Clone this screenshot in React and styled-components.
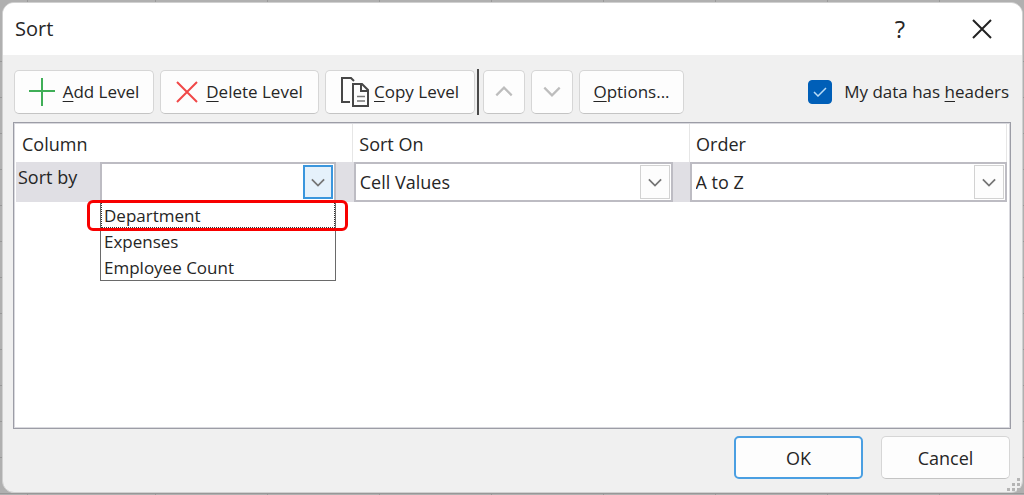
import React, { useState } from "react";
import styled, { createGlobalStyle } from "styled-components";

const GlobalStyle = createGlobalStyle`
  * { box-sizing: border-box; }
  html, body { margin: 0; padding: 0; }
  body {
    background-color: #b0b0b0;
    background-image:
      repeating-linear-gradient(90deg, transparent 0 111px, #989898 111px 112px),
      repeating-linear-gradient(180deg, transparent 0 35px, #989898 35px 36px);
    background-position: 44px 0, 0 26px;
    color: #262626;
    font-family: "Open Sans", "Noto Sans", sans-serif;
    font-size: 18px;
    line-height: 24px;
  }
  button, select, input { font: inherit; color: inherit; margin: 0; }
`;

const Desktop = styled.div`
  display: flex;
  min-height: 100vh;
  padding: 2px 1px 2px 2px;
`;

const Dialog = styled.main`
  flex: 1;
  display: flex;
  flex-direction: column;
  min-width: 0;
  background: #f0f0f0;
  border: 1px solid #d0d0d0;
  border-radius: 12px;
  overflow: hidden;
`;

const TitleBar = styled.header`
  display: flex;
  align-items: center;
  height: 52px;
  padding: 0 20px 0 12px;
  background: #fff;
`;

const Title = styled.h1`
  flex: 1;
  margin: 0;
  font-size: 20px;
  font-weight: 400;
`;

const TitleButton = styled.button`
  display: grid;
  place-items: center;
  width: 40px;
  height: 40px;
  padding: 0;
  margin-left: ${(p) => (p.$spaced ? "42px" : "0")};
  border: 0;
  background: transparent;
  font-size: 24px;
`;

const Toolbar = styled.div`
  display: flex;
  align-items: center;
  height: 67px;
  padding: 6px 13px 0 11px;
  font-size: 17px;
`;

const Button = styled.button`
  display: flex;
  align-items: center;
  justify-content: center;
  gap: ${(p) => p.$gap || "0"};
  flex: none;
  width: ${(p) => p.$width};
  height: ${(p) => p.$height || "44px"};
  padding: 0;
  margin-right: ${(p) => (p.$last ? "0" : "6px")};
  border: ${(p) => (p.$primary ? "2px solid #4a9fe2" : "1px solid #d6d6d6")};
  border-bottom-color: ${(p) => (p.$primary ? "#4a9fe2" : "#c4c4c4")};
  border-radius: 5px;
  background: #fdfdfd;
  white-space: nowrap;
`;

const Key = styled.span`
  text-decoration: underline;
  text-decoration-thickness: 1px;
  text-underline-offset: 3px;
`;

const Separator = styled.span`
  width: 2px;
  height: 46px;
  margin: 0 4px 0 -4px;
  background: #4a4a4a;
`;

const HeadersOption = styled.label`
  display: flex;
  align-items: center;
  gap: 12px;
  margin-left: auto;
  white-space: nowrap;
`;

const Stack = styled.span`
  display: grid;
  align-items: center;
  > * { grid-area: 1 / 1; }
  > svg { pointer-events: none; justify-self: center; }
`;

const CheckInput = styled.input`
  appearance: none;
  width: 24px;
  height: 24px;
  border: 1px solid #8a8a8a;
  border-radius: 4px;
  background: #fff;
  &:checked { background: #005fb8; border-color: #005fb8; }
`;

const Levels = styled.section`
  flex: 1;
  margin: 0 11px 0 10px;
  padding: 1px 3px 1px 2px;
  background: #fff;
  border: 1px solid #9c9da6;
  box-shadow: inset 0 0 0 1px #d9d9de;
`;

const LevelTable = styled.table`
  width: 100%;
  table-layout: fixed;
  border-collapse: collapse;
`;

const HeadCell = styled.th`
  width: ${(p) => p.$width || "auto"};
  height: 38px;
  padding: 2px 6px 0;
  border-right: 1px solid #e6e6e6;
  text-align: left;
  font-weight: 400;
`;

const LevelRow = styled.tr`
  background: #e0dfe4;
`;

const Cell = styled.td`
  padding: ${(p) => p.$padding || "0"};
  vertical-align: top;
`;

const SortBy = styled.div`
  display: flex;
`;

const SortByLabel = styled.label`
  flex: none;
  width: 84px;
  padding: 3px 0 0 2px;
`;

const Combo = styled.div`
  position: relative;
  flex: 1;
  display: grid;
  align-items: center;
  > select, > span { grid-area: 1 / 1; }
`;

const Select = styled.select`
  appearance: none;
  width: 100%;
  height: 40px;
  padding: 0 36px 0 4px;
  border: 2px solid #bdbcc3;
  border-radius: 0;
  background: #fff;
`;

const Arrow = styled.span`
  justify-self: end;
  display: grid;
  place-items: center;
  width: 30px;
  height: 34px;
  margin-right: 3px;
  pointer-events: none;
  border: ${(p) => (p.$active ? "2px solid #3a96dd" : "1px solid #d2d2d2")};
  background: ${(p) => (p.$active ? "#e5f1fb" : "#fdfdfd")};
`;

const Menu = styled.ul`
  position: absolute;
  z-index: 1;
  top: 39px;
  left: 0;
  right: 0;
  margin: 0;
  padding: 0;
  border: 1px solid #6a6a6a;
  background: #fff;
  list-style: none;
  font-size: 17px;
`;

const MenuItem = styled.li`
  height: 26px;
  padding: 2px 0 0 3px;
  outline: ${(p) => (p.$focused ? "1px dotted #333" : "none")};
  outline-offset: -1px;
`;

const Highlight = styled.span`
  position: absolute;
  z-index: 2;
  top: 38px;
  left: -13px;
  right: -12px;
  height: 31px;
  border: 3px solid #f80000;
  border-radius: 6px;
  pointer-events: none;
`;

const Footer = styled.footer`
  display: flex;
  justify-content: flex-end;
  gap: 12px;
  padding: 7px 12px 13px;
`;

const Grip = styled.svg`
  position: fixed;
  right: 4px;
  bottom: 4px;
`;

const Chevron = ({ up, color = "#767676", size = 14 }) => (
  <svg width={size} height={size > 14 ? 11 : 9} viewBox="0 0 16 10" fill="none" stroke={color} strokeWidth="2" aria-hidden="true">
    <path d={up ? "M1 8.5 8 1.5l7 7" : "M1 1.5l7 7 7-7"} />
  </svg>
);

const PlusIcon = () => (
  <svg width="26" height="28" viewBox="0 0 26 28" stroke="#3fae57" strokeWidth="2" aria-hidden="true">
    <path d="M13 0v28M0 13h26" />
  </svg>
);

const DeleteIcon = () => (
  <svg width="22" height="22" viewBox="0 0 22 22" stroke="#f04848" strokeWidth="2" aria-hidden="true">
    <path d="M1 1l20 20M21 1L1 21" />
  </svg>
);

const CopyIcon = () => (
  <svg width="29" height="30" viewBox="0 0 29 30" fill="none" stroke="#474747" strokeWidth="2" aria-hidden="true">
    <path d="M9 25H1V1h9l3 3" />
    <path d="M12 7h9l6 6v16H12z" />
    <path d="M20 7v7h7" />
    <path d="M16 19.5h8M16 24h8" stroke="#777" strokeWidth="1.5" />
  </svg>
);

const CloseIcon = () => (
  <svg width="20" height="20" viewBox="0 0 20 20" stroke="#222" strokeWidth="2" aria-hidden="true">
    <path d="M1 1l18 18M19 1L1 19" />
  </svg>
);

const columns = ["Department", "Expenses", "Employee Count"];

export default function App() {
  const [headers, setHeaders] = useState(true);
  return (
    <Desktop>
      <GlobalStyle />
      <Dialog>
        <TitleBar>
          <Title>Sort</Title>
          <TitleButton aria-label="Help">?</TitleButton>
          <TitleButton $spaced aria-label="Close"><CloseIcon /></TitleButton>
        </TitleBar>
        <Toolbar>
          <Button $width="140px" $gap="8px"><PlusIcon /><span><Key>A</Key>dd Level</span></Button>
          <Button $width="159px" $gap="8px"><DeleteIcon /><span><Key>D</Key>elete Level</span></Button>
          <Button $width="150px" $gap="4px"><CopyIcon /><span><Key>C</Key>opy Level</span></Button>
          <Separator />
          <Button $width="42px" aria-label="Move up"><Chevron up color="#bdbdbd" size={18} /></Button>
          <Button $width="42px" aria-label="Move down"><Chevron color="#bdbdbd" size={18} /></Button>
          <Button $width="105px"><span><Key>O</Key>ptions...</span></Button>
          <HeadersOption>
            <Stack>
              <CheckInput type="checkbox" checked={headers} onChange={(e) => setHeaders(e.target.checked)} />
              <svg width="14" height="10" viewBox="0 0 14 10" fill="none" stroke="#b9dcf6" strokeWidth="1.5" aria-hidden="true">
                <path d="M1 5l4 4 8-8" />
              </svg>
            </Stack>
            <span>My data has <Key>h</Key>eaders</span>
          </HeadersOption>
        </Toolbar>
        <Levels>
          <LevelTable>
            <thead>
              <tr>
                <HeadCell $width="34%">Column</HeadCell>
                <HeadCell $width="34%">Sort On</HeadCell>
                <HeadCell>Order</HeadCell>
              </tr>
            </thead>
            <tbody>
              <LevelRow>
                <Cell $padding="0 17px 0 0">
                  <SortBy>
                    <SortByLabel htmlFor="sort-by">Sort by</SortByLabel>
                    <Combo>
                      <Select id="sort-by" defaultValue="">
                        <option value="" />
                        {columns.map((c) => <option key={c}>{c}</option>)}
                      </Select>
                      <Arrow $active><Chevron /></Arrow>
                      <Menu role="listbox" aria-label="Sort by">
                        {columns.map((c, i) => (
                          <MenuItem key={c} role="option" aria-selected={i === 0} $focused={i === 0}>{c}</MenuItem>
                        ))}
                      </Menu>
                      <Highlight />
                    </Combo>
                  </SortBy>
                </Cell>
                <Cell $padding="0 17px 0 1px">
                  <Combo>
                    <Select aria-label="Sort On"><option>Cell Values</option></Select>
                    <Arrow><Chevron /></Arrow>
                  </Combo>
                </Cell>
                <Cell>
                  <Combo>
                    <Select aria-label="Order"><option>A to Z</option></Select>
                    <Arrow><Chevron /></Arrow>
                  </Combo>
                </Cell>
              </LevelRow>
            </tbody>
          </LevelTable>
        </Levels>
        <Footer>
          <Button $width="129px" $height="43px" $primary>OK</Button>
          <Button $width="129px" $height="43px" $last>Cancel</Button>
        </Footer>
        <Grip width="13" height="13" viewBox="0 0 13 13" fill="#b5b5b5" aria-hidden="true">
          <path d="M10 0h3v3h-3zM5 5h3v3H5zM10 5h3v3h-3zM0 10h3v3H0zM5 10h3v3H5zM10 10h3v3h-3z" />
        </Grip>
      </Dialog>
    </Desktop>
  );
}
